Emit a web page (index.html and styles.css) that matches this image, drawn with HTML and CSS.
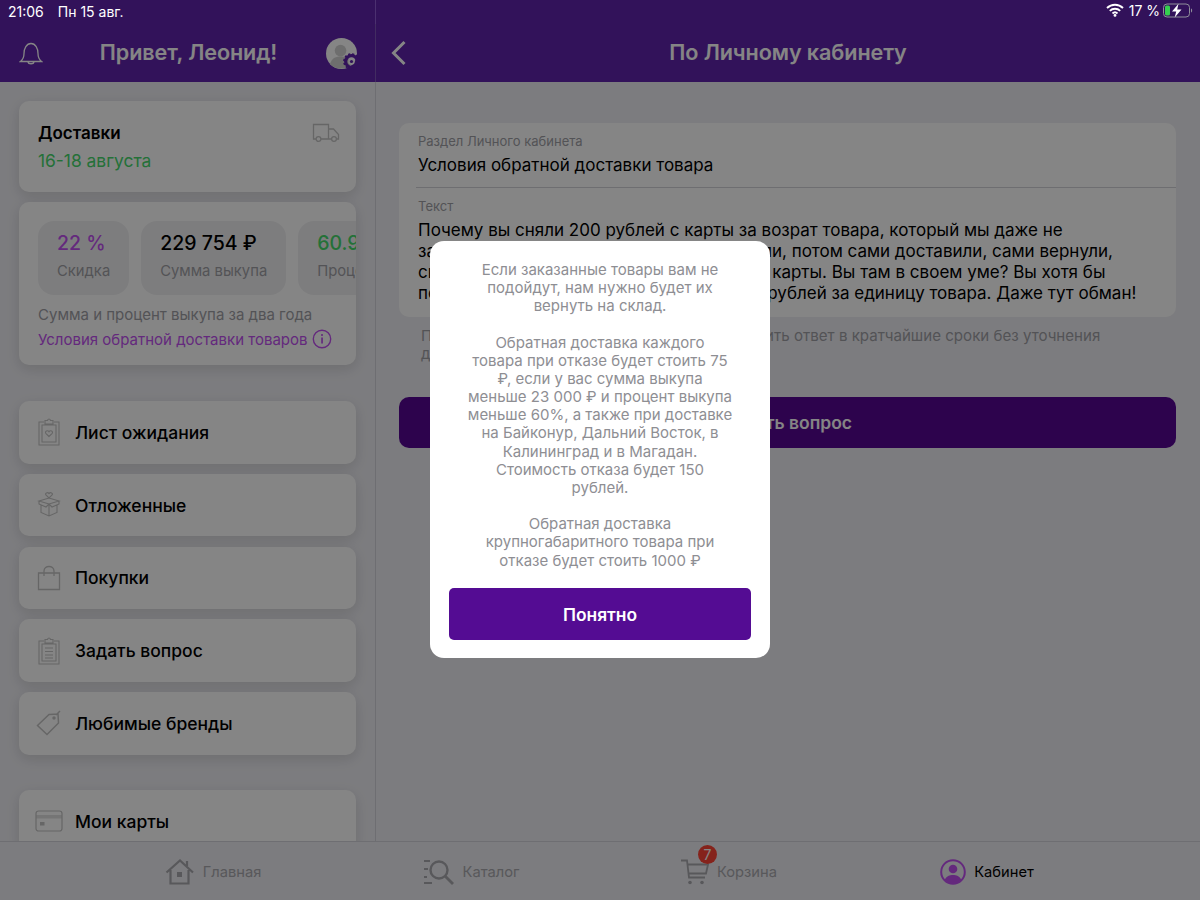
FILE: index.html
```html
<!DOCTYPE html>
<html lang="ru">
<head>
  <meta charset="UTF-8">
  <title>По Личному кабинету</title>
  <link rel="stylesheet" href="styles.css">
</head>
<body>
  <div class="app">
    <div class="status">
      <div class="status-left"><span class="time">21:06</span><span>Пн 15 авг.</span></div>
      <div class="status-right">
        <svg width="18" height="14" viewBox="0 0 18 14"><path d="M1 5a11.500 11.500 0 0 1 16 0M3.800 7.900a7.500 7.500 0 0 1 10.400 0M6.500 10.500a3.600 3.600 0 0 1 5 0" fill="none" stroke="#fff" stroke-width="1.900"/><circle cx="9" cy="12.400" r="1.400" fill="#fff"/></svg>
        <span>17 %</span>
        <svg class="battery" width="31" height="15" viewBox="0 0 31 15"><rect x="0.500" y="1" width="26" height="13" rx="3.500" fill="none" stroke="#8f8f9a"/><rect x="2" y="2.500" width="5" height="10" rx="1.500" fill="#35d04f"/><path d="M28 5.500c1.500.4 1.500 3.600 0 4z" fill="#8f8f9a"/><path d="M15.500 0.800 9 8.500h4.200l-1.500 5.900 6.800-8h-4.300z" fill="#fff"/></svg>
      </div>
    </div>

    <header class="topbar">
      <div class="topbar-left">
        <svg class="bell" width="24" height="24" viewBox="0 0 24 24"><path d="M1.500 20.500c2.500-2 3.500-4 3.500-8 0-5 2.500-10 7-10s7 5 7 10c0 4 1 6 3.500 8zM9 20.800c.4 2.600 5.600 2.600 6 0" fill="none" stroke="currentColor" stroke-width="1.300"/></svg>
        <h1>Привет, Леонид!</h1>
        <div class="avatar">
          <svg width="31" height="31" viewBox="0 0 32 32"><circle cx="16" cy="16" r="16" fill="#fff"/><circle cx="15" cy="13" r="6" fill="#d4d4d4"/><path d="M4 27c2-7 7-8 11-8s9 1 11 8a16 16 0 0 1-22 0z" fill="#d4d4d4"/></svg>
          <svg class="gear" width="17" height="17" viewBox="0 0 16 16"><circle cx="8" cy="8" r="5.500" fill="none" stroke="#6023ad" stroke-width="3"/><circle cx="8" cy="8" r="7" fill="none" stroke="#6023ad" stroke-width="1.800" stroke-dasharray="2 1.700"/><circle cx="8" cy="8" r="3" fill="#fff"/><circle cx="8" cy="8" r="1.500" fill="#6023ad"/></svg>
        </div>
      </div>
      <div class="topbar-right">
        <svg class="back" width="18" height="26" viewBox="0 0 18 26"><path d="M14.500 2 3.500 13l11 11" fill="none" stroke="currentColor" stroke-width="3"/></svg>
        <h2>По Личному кабинету</h2>
      </div>
    </header>

    <div class="content">
      <aside class="sidebar">
        <section class="card delivery">
          <div>
            <div class="delivery-title">Доставки</div>
            <div class="delivery-date">16-18 августа</div>
          </div>
          <svg class="truck" width="28" height="20" viewBox="0 0 28 20"><path d="M4 16H1.500V1.500h15V16H9M16.500 6h5l5 5.500V16h-2M19.500 16h-3" fill="none" stroke="#c4c4c4" stroke-width="1.300"/><circle cx="6.500" cy="16" r="2.400" fill="none" stroke="#c4c4c4" stroke-width="1.300"/><circle cx="22" cy="16" r="2.400" fill="none" stroke="#c4c4c4" stroke-width="1.300"/></svg>
        </section>

        <section class="card stats">
          <div class="chips">
            <div class="chip"><div class="chip-value purple">22 %</div><div class="chip-label">Скидка</div></div>
            <div class="chip"><div class="chip-value">229 754 ₽</div><div class="chip-label">Сумма выкупа</div></div>
            <div class="chip"><div class="chip-value green">60.9 %</div><div class="chip-label">Процент выкупа</div></div>
          </div>
          <div class="stats-note">Сумма и процент выкупа за два года</div>
          <div class="stats-link">Условия обратной доставки товаров
            <svg width="20" height="20" viewBox="0 0 20 20"><circle cx="10" cy="10" r="8.700" fill="none" stroke="currentColor" stroke-width="1.400"/><rect x="9.200" y="8.500" width="1.700" height="6" fill="currentColor"/><circle cx="10" cy="6" r="1.100" fill="currentColor"/></svg>
          </div>
        </section>

        <nav class="menu">
          <a class="card menu-item">
            <svg width="24" height="28" viewBox="0 0 24 28"><path d="M7 4H2v23h20V4h-5M5 7h14v17H5zM8 2.500h2.500c.5-2 2.500-2 3 0H16V6H8z" fill="none" stroke="#c4c4c4" stroke-width="1.100"/><path d="M12 18.500l-3.200-3.200c-1.300-1.800 1.900-3.700 3.200-1.500 1.300-2.200 4.500-.3 3.200 1.500z" fill="none" stroke="#c4c4c4" stroke-width="1.100"/></svg>
            <span>Лист ожидания</span>
          </a>
          <a class="card menu-item">
            <svg width="24" height="28" viewBox="0 0 24 28"><path d="M12 7 8.900 4c-1.300-1.700 1.700-3.300 3.100-1.400C13.400.7 16.400 2.300 15.100 4zM12 13 2 10l10-3 10 3zM2 10v3l2 1v7.500l8 3.500 8-3.500V14l2-1v-3M12 13v12M2 13l7 3 3-3 3 3 7-3" fill="none" stroke="#c4c4c4" stroke-width="1.100"/></svg>
            <span>Отложенные</span>
          </a>
          <a class="card menu-item">
            <svg width="24" height="26" viewBox="0 0 24 26"><path d="M1.500 8h21v16.500h-21zM7 11V6c0-6 10-6 10 0v5" fill="none" stroke="#c4c4c4" stroke-width="1.300"/></svg>
            <span>Покупки</span>
          </a>
          <a class="card menu-item">
            <svg width="22" height="28" viewBox="0 0 22 28"><path d="M6 4H1v23h20V4h-5M4 7h14v17H4zM7 2.500h2.500c.5-2 2.500-2 3 0H15V6H7zM7 11h8M7 14.500h8M7 18h8M7 21h8" fill="none" stroke="#c4c4c4" stroke-width="1.100"/></svg>
            <span>Задать вопрос</span>
          </a>
          <a class="card menu-item">
            <svg width="26" height="26" viewBox="0 0 26 26"><path d="M1.500 15.500 13 4.500l9-.5.500 9L11 24.500zM20 5l4-4" fill="none" stroke="#c4c4c4" stroke-width="1.500"/><circle cx="18" cy="8" r="1.700" fill="#c4c4c4"/></svg>
            <span>Любимые бренды</span>
          </a>
          <a class="card menu-item menu-item-last">
            <svg width="28" height="22" viewBox="0 0 28 22"><rect x="1" y="1" width="26" height="20" rx="2.500" fill="none" stroke="#c4c4c4" stroke-width="1.200"/><rect x="1" y="5" width="26" height="3.500" fill="#c4c4c4" opacity=".5"/><rect x="5" y="12" width="4.500" height="3.500" fill="#c4c4c4"/></svg>
            <span>Мои карты</span>
          </a>
        </nav>
      </aside>

      <main class="main">
        <section class="form-card">
          <div class="field field-top">
            <div class="field-label">Раздел Личного кабинета</div>
            <div class="field-value">Условия обратной доставки товара</div>
          </div>
          <div class="field">
            <div class="field-label">Текст</div>
            <div class="field-text">
              Почему вы сняли 200 рублей с карты за возрат товара, который мы даже не<br>
              заказывали. Вы сами всё это нам привезли, потом сами доставили, сами вернули,<br>
              сняли деньги и ещё раз списали деньги с карты. Вы там в своем уме? Вы хотя бы<br>
              посмотрите условия, там же указано 150 рублей за единицу товара. Даже тут обман!
            </div>
          </div>
        </section>
        <p class="hint">Пожалуйста, задайте вопрос так, чтобы получить ответ в кратчайшие сроки без уточнения<br>деталей</p>
        <button class="ask-btn">Задать вопрос</button>
      </main>
    </div>

    <footer class="tabs">
      <a class="tab">
        <svg width="30" height="26" viewBox="0 0 30 26"><path d="M1.500 13.500 15 1.500l13 12M5.500 11v13.500h18V11M22 7V2" fill="none" stroke="#a9a9ae" stroke-width="2.200"/><rect x="12" y="13" width="5" height="5" fill="#a9a9ae"/></svg>
        <span>Главная</span>
      </a>
      <a class="tab">
        <svg width="32" height="26" viewBox="0 0 32 26"><path d="M1 2h6M1 10h4M1 18h3M1 24h8" stroke="#a9a9ae" stroke-width="2.200" fill="none"/><circle cx="16" cy="11" r="8.500" fill="none" stroke="#a9a9ae" stroke-width="2.400"/><path d="m22 17 8 8" stroke="#a9a9ae" stroke-width="2.800"/></svg>
        <span>Каталог</span>
      </a>
      <a class="tab">
        <span class="cart-icon">
          <svg width="28" height="26" viewBox="0 0 28 26"><path d="M0 1.500h6l2 17h16M7 5.500h20l-2 9H8" fill="none" stroke="#a9a9ae" stroke-width="1.800"/><circle cx="9" cy="23.500" r="1.800" fill="#a9a9ae"/><circle cx="21" cy="23.500" r="1.800" fill="#a9a9ae"/></svg>
          <b class="badge">7</b>
        </span>
        <span>Корзина</span>
      </a>
      <a class="tab tab-active">
        <svg width="26" height="26" viewBox="0 0 26 26"><circle cx="13" cy="13" r="11.800" fill="none" stroke="#c050f0" stroke-width="2"/><circle cx="13" cy="10" r="4.300" fill="#c050f0"/><path d="M4.500 21c2-4 5-5 8.500-5s6.500 1 8.500 5a12 12 0 0 1-17 0z" fill="#c050f0"/></svg>
        <span>Кабинет</span>
      </a>
    </footer>

    <div class="overlay">
      <div class="dialog">
        <p class="dialog-text">
          Если заказанные товары вам не<br>подойдут, нам нужно будет их<br>вернуть на склад.<br><br>
          Обратная доставка каждого<br>товара при отказе будет стоить 75<br>₽, если у вас сумма выкупа<br>меньше 23 000 ₽ и процент выкупа<br>меньше 60%, а также при доставке<br>на Байконур, Дальний Восток, в<br>Калининград и в Магадан.<br>Стоимость отказа будет 150<br>рублей.<br><br>
          Обратная доставка<br>крупногабаритного товара при<br>отказе будет стоить 1000 ₽
        </p>
        <button class="dialog-btn">Понятно</button>
      </div>
    </div>
  </div>
</body>
</html>
```

FILE: styles.css
```css
/* Global */
* {
  box-sizing: border-box;
}
body {
  margin: 0;
  font-family: 'Inter', 'Roboto', sans-serif;
  color: #000;
  background: #eeeef3;
}
.app {
  position: relative;
  width: 1200px;
  height: 900px;
  overflow: hidden;
  display: flex;
  flex-direction: column;
}

/* Status bar stays above the dimmed layer */
.status {
  position: relative;
  z-index: 2;
  flex: none;
  height: 24px;
  display: flex;
  justify-content: space-between;
  background: #32125a;
  color: #fff;
  font-size: 14px;
}
.status-left {
  width: 376px;
  padding: 3px 0 0 8px;
  border-right: 1px solid #4b3070;
}
.status-left .time {
  margin-right: 14px;
}
.status-right {
  display: flex;
  align-items: center;
  gap: 5px;
  padding: 0 6px 4px 0;
}
.battery {
  margin-left: -2px;
}

/* Header */
.topbar {
  flex: none;
  height: 58px;
  display: flex;
  background: #6023ad;
  color: #fff;
}
.topbar-left {
  width: 376px;
  padding: 0 18px 0 19px;
  display: flex;
  align-items: center;
  justify-content: space-between;
  border-right: 1px solid #7f55bb;
}
.topbar-left h1,
.topbar-right h2 {
  margin: 0 0 2px;
  font-size: 21.6px;
  font-weight: 600;
  letter-spacing: -0.1px;
}
.topbar-left h1 {
  margin-left: 8px;
}
.avatar {
  position: relative;
  width: 31px;
  height: 31px;
}
.gear {
  position: absolute;
  right: -3px;
  bottom: -1px;
}
.topbar-right {
  flex: 1;
  position: relative;
  display: flex;
  align-items: center;
  justify-content: center;
}
.back {
  position: absolute;
  left: 14px;
  top: 16px;
}

/* Body */
.content {
  flex: 1;
  min-height: 0;
  display: flex;
}
.sidebar {
  width: 376px;
  flex: none;
  padding: 19px 19px 0;
  border-right: 1px solid #d4d4da;
  overflow: hidden;
}
.card {
  background: #fff;
  border-radius: 10px;
  box-shadow: 0 4px 14px rgba(0,0,0,0.12);
}
.delivery {
  height: 91px;
  padding: 22px 16px 0 19px;
  display: flex;
  justify-content: space-between;
  align-items: flex-start;
}
.delivery-title {
  font-size: 17px;
  font-weight: 600;
}
.delivery-date {
  margin-top: 7px;
  font-size: 17.4px;
  color: #46d86c;
}
.stats {
  height: 163px;
  margin-top: 10px;
  padding: 19px 0 0 19px;
  overflow: hidden;
}
.chips {
  display: flex;
  gap: 12px;
}
.chip {
  flex: none;
  height: 74px;
  padding: 10px 19px 0;
  border-radius: 16px;
  background: #f0f0f2;
}
.chip-value {
  font-size: 19.5px;
  font-weight: 500;
}
.chip-label {
  margin-top: 7px;
  font-size: 14.8px;
  color: #a0a0a6;
}
.purple {
  color: #c050f0;
}
.green {
  color: #46d86c;
}
.stats-note {
  margin-top: 10px;
  font-size: 15px;
  color: #a0a0a6;
}
.stats-link {
  margin-top: 5px;
  display: flex;
  align-items: center;
  gap: 4px;
  font-size: 15px;
  color: #c050f0;
}
.menu {
  margin-top: 36px;
  display: flex;
  flex-direction: column;
  gap: 10.25px;
}
.menu-item {
  flex: none;
  height: 62.5px;
  padding-left: 15px;
  display: flex;
  align-items: center;
  font-size: 17.5px;
  font-weight: 500;
}
.menu-item svg {
  flex: none;
  width: 30px;
  margin-right: 11px;
}
.menu-item-last {
  margin-top: 25px;
}

/* Right column */
.main {
  flex: 1;
  padding: 41px 24px 0 23px;
}
.form-card {
  height: 194px;
  background: #fff;
  border-radius: 10px;
  padding: 10px 0 0 19px;
}
.field-top {
  height: 55px;
  border-bottom: 1px solid #d4d4d8;
  margin-left: -2px;
  padding-left: 2px;
}
.field-label {
  font-size: 13px;
  color: #a0a0a6;
}
.field-value {
  margin-top: 6px;
  font-size: 17px;
}
.field:last-child {
  padding-top: 10px;
}
.field-text {
  margin-top: 6px;
  font-size: 17px;
  line-height: 21px;
  white-space: nowrap;
}
.hint {
  margin: 10px 0 0 22px;
  font-size: 15.1px;
  line-height: 18px;
  color: #a0a0a6;
}
.ask-btn {
  display: block;
  width: 100%;
  height: 51px;
  margin-top: 34px;
  border: none;
  border-radius: 10px;
  background: #570694;
  color: #fff;
  font: 600 17.5px 'Inter', sans-serif;
}

/* Tab bar */
.tabs {
  flex: none;
  height: 59px;
  padding: 1px 84px 0;
  display: grid;
  grid-template-columns: repeat(4, 1fr);
  background: #eeeef3;
  border-top: 1px solid #d4d4da;
}
.tab {
  display: flex;
  align-items: center;
  justify-content: center;
  gap: 8px;
  font-size: 14.7px;
  color: #a9a9ae;
}
.tab-active {
  color: #000;
}
.cart-icon {
  position: relative;
  display: flex;
}
.badge {
  position: absolute;
  top: -14px;
  left: 17px;
  width: 19px;
  height: 19px;
  border-radius: 50%;
  background: #ff4436;
  color: #fff;
  font-size: 14px;
  font-weight: 400;
  line-height: 19px;
  text-align: center;
}

/* Dialog */
.overlay {
  position: absolute;
  inset: 0;
  z-index: 1;
  display: flex;
  align-items: center;
  justify-content: center;
  background: rgba(0,0,0,0.48);
}
.dialog {
  width: 340px;
  height: 417px;
  margin-bottom: 1px;
  padding: 20px 19px 0;
  background: #fff;
  border-radius: 14px;
}
.dialog-text {
  margin: 0;
  height: 327px;
  font-size: 15px;
  line-height: 18.15px;
  text-align: center;
  white-space: nowrap;
  color: #8e8e93;
}
.dialog-btn {
  display: block;
  width: 100%;
  height: 52px;
  border: none;
  border-radius: 5px;
  background: #540c93;
  color: #fff;
  font: 600 17.4px 'Inter', sans-serif;
}
```
